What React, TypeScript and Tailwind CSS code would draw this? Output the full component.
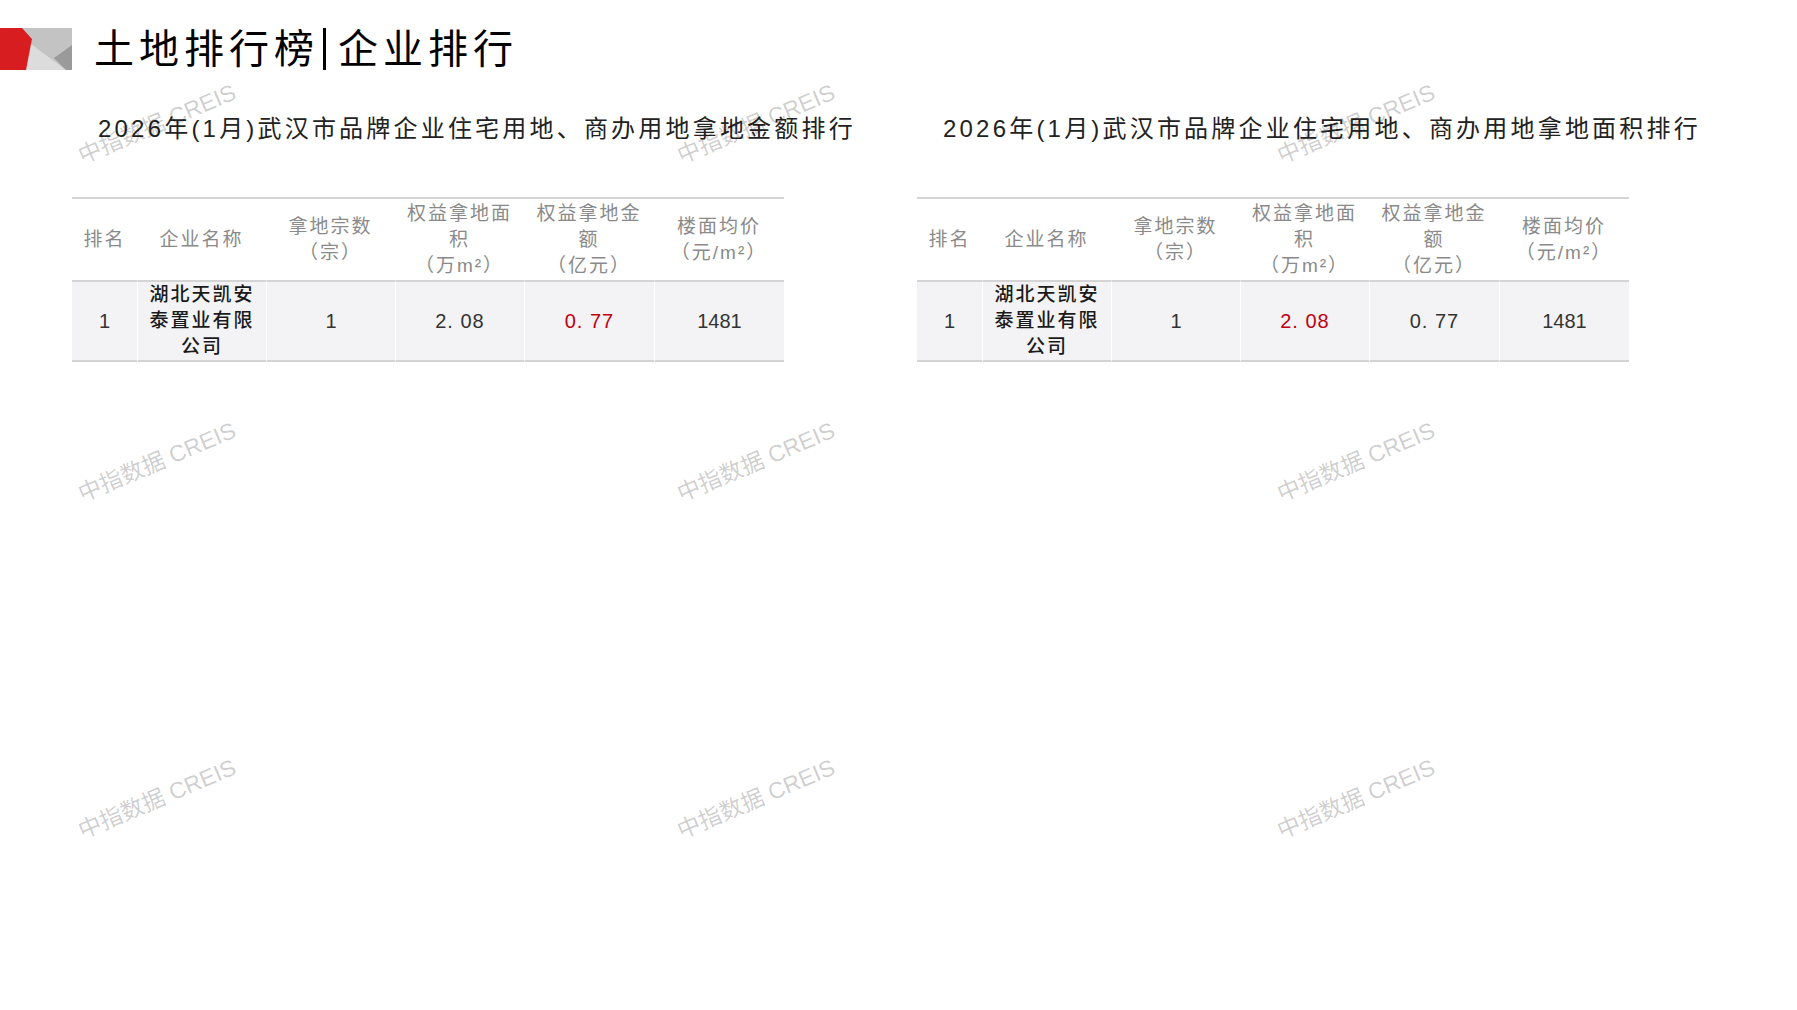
import React from "react";

type Ranking = {
  title: string;
  highlight: "area" | "amount";
};

const rankings: Ranking[] = [
  { title: "2026年(1月)武汉市品牌企业住宅用地、商办用地拿地金额排行", highlight: "amount" },
  { title: "2026年(1月)武汉市品牌企业住宅用地、商办用地拿地面积排行", highlight: "area" },
];

const watermarks = [
  "left-[157px] top-[124px]",
  "left-[756px] top-[124px]",
  "left-[1356px] top-[124px]",
  "left-[157px] top-[462px]",
  "left-[756px] top-[462px]",
  "left-[1356px] top-[462px]",
  "left-[157px] top-[799px]",
  "left-[756px] top-[799px]",
  "left-[1356px] top-[799px]",
];

function Logo() {
  return (
    <svg width="72" height="42" viewBox="0 0 72 42" className="shrink-0">
      <rect x="18" y="0" width="54" height="42" fill="#c3c3c3" />
      <polygon points="27,13 66,42 24,42" fill="#dcdcdc" />
      <polygon points="72,17 54,30 66,42 72,42" fill="#9a9a9a" />
      <polygon points="0,0 22,0 32,11 26,42 0,42" fill="#d71d20" />
    </svg>
  );
}

function RankTable({ title, highlight }: Ranking) {
  return (
    <section className="w-[712px]">
      <h2 className="ml-[26px] whitespace-nowrap text-[24px] leading-[32px] tracking-[3.2px] text-[#222]">
        {title}
      </h2>

      <div className="mt-[52px] grid grid-cols-[65px_129px_129px_129px_130px_130px] border-t-2 border-[#d4d4d4] text-center">
        {/* header */}
        <div className="h-[81px] flex items-center justify-center text-[19px] leading-[26px] tracking-[2px] text-[#8a8a8a]">排名</div>
        <div className="h-[81px] flex items-center justify-center text-[19px] leading-[26px] tracking-[2px] text-[#8a8a8a]">企业名称</div>
        <div className="h-[81px] flex items-center justify-center text-[19px] leading-[26px] tracking-[2px] text-[#8a8a8a]">
          <span>拿地宗数<br />（宗）</span>
        </div>
        <div className="h-[81px] flex items-center justify-center text-[19px] leading-[26px] tracking-[2px] text-[#8a8a8a]">
          <span>权益拿地面<br />积<br />（万m²）</span>
        </div>
        <div className="h-[81px] flex items-center justify-center text-[19px] leading-[26px] tracking-[2px] text-[#8a8a8a]">
          <span>权益拿地金<br />额<br />（亿元）</span>
        </div>
        <div className="h-[81px] flex items-center justify-center text-[19px] leading-[26px] tracking-[2px] text-[#8a8a8a]">
          <span>楼面均价<br />（元/m²）</span>
        </div>

        {/* data row */}
        <div className="h-[82px] flex items-center justify-center border-t-2 border-b-2 border-[#d4d4d4] bg-[#f3f3f5] text-[20px] text-[#333]">1</div>
        <div className="h-[82px] flex items-center justify-center border-t-2 border-b-2 border-[#d4d4d4] bg-[#f3f3f5] border-l border-l-white text-[19px] leading-[26px] tracking-[2px] font-medium text-[#1a1a1a]">
          <span>湖北天凯安<br />泰置业有限<br />公司</span>
        </div>
        <div className="h-[82px] flex items-center justify-center border-t-2 border-b-2 border-[#d4d4d4] bg-[#f3f3f5] border-l border-l-white text-[20px] text-[#333]">1</div>
        <div className={`h-[82px] flex items-center justify-center border-t-2 border-b-2 border-[#d4d4d4] bg-[#f3f3f5] border-l border-l-white text-[20px] tracking-[1px] ${highlight === "area" ? "text-[#c00010]" : "text-[#333]"}`}>
          2. 08
        </div>
        <div className={`h-[82px] flex items-center justify-center border-t-2 border-b-2 border-[#d4d4d4] bg-[#f3f3f5] border-l border-l-white text-[20px] tracking-[1px] ${highlight === "amount" ? "text-[#c00010]" : "text-[#333]"}`}>
          0. 77
        </div>
        <div className="h-[82px] flex items-center justify-center border-t-2 border-b-2 border-[#d4d4d4] bg-[#f3f3f5] border-l border-l-white text-[20px] text-[#333]">1481</div>
      </div>
    </section>
  );
}

export default function App() {
  return (
    <div
      className="relative w-[1797px] h-[1010px] overflow-hidden bg-white"
      style={{ fontFamily: '"Liberation Sans", "Noto Sans CJK SC", sans-serif' }}
    >
      <header className="flex items-center pt-[28px]">
        <Logo />
        <h1 className="ml-[22px] flex items-center text-[40px] leading-[42px] tracking-[5px] text-black">
          土地排行榜
          <span className="ml-[4px] mr-[12px] inline-block h-[42px] w-[3px] bg-black" />
          企业排行
        </h1>
      </header>

      <div className="flex gap-[133px] pl-[72px] mt-[43px]">
        {rankings.map((r) => (
          <RankTable key={r.title} {...r} />
        ))}
      </div>

      {watermarks.map((pos) => (
        <div
          key={pos}
          className={`pointer-events-none absolute ${pos} -translate-x-1/2 -translate-y-1/2 -rotate-[23deg] whitespace-nowrap text-[23px] text-black/20`}
        >
          中指数据 CREIS
        </div>
      ))}
    </div>
  );
}
